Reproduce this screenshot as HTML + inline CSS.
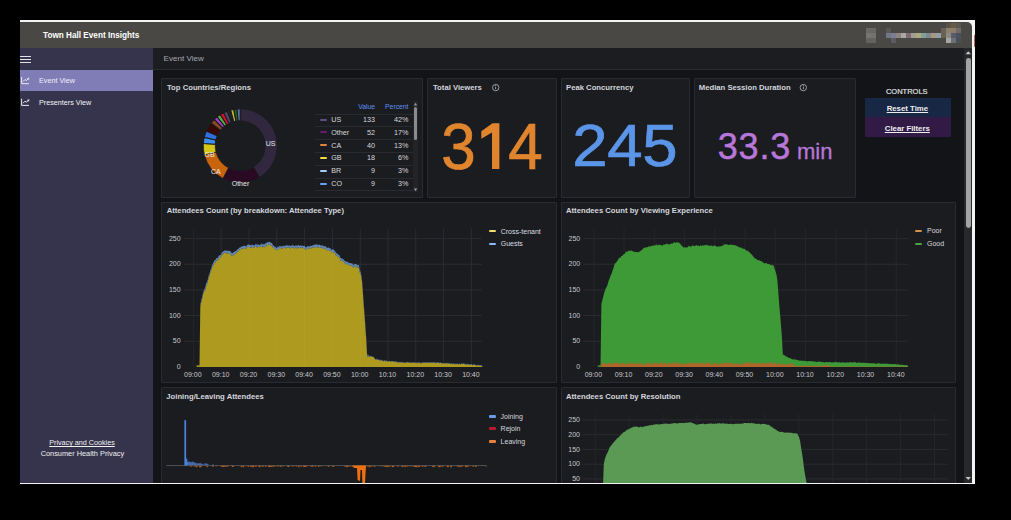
<!DOCTYPE html><html><head><meta charset="utf-8"><style>
*{margin:0;padding:0;box-sizing:border-box}
html,body{width:1011px;height:520px;background:#000;overflow:hidden;font-family:"Liberation Sans",sans-serif}
.a{position:absolute;white-space:nowrap}
.panel{position:absolute;background:#1b1c20;border:1px solid #2a2b30;border-radius:1px}
svg{position:absolute;left:0;top:0}
</style></head><body>
<div class="a" style="left:20px;top:20px;width:955px;height:464px;background:#f4f4f4;"></div>
<div class="a" style="left:0;top:0;width:1011px;height:483px;overflow:hidden">
<div class="a" style="left:20px;top:22px;width:952px;height:26px;background:#4a4845;border-top-right-radius:5px"></div>
<div class="a" style="left:974px;top:35px;width:1px;height:12px;background:#b86a58;"></div>
<div class="a" style="left:43.0px;top:29.5px;line-height:12px;font-size:8.2px;color:#ffffff;font-weight:bold;">Town Hall Event Insights</div>
<div class="a" style="left:866px;top:28px;width:5px;height:5px;background:#6a6866;"></div>
<div class="a" style="left:871px;top:28px;width:5px;height:5px;background:#686664;"></div>
<div class="a" style="left:866px;top:33px;width:5px;height:5px;background:#777572;"></div>
<div class="a" style="left:871px;top:33px;width:5px;height:5px;background:#74726f;"></div>
<div class="a" style="left:866px;top:38px;width:5px;height:5px;background:#646260;"></div>
<div class="a" style="left:871px;top:38px;width:5px;height:5px;background:#64625f;"></div>
<div class="a" style="left:886px;top:28px;width:5px;height:5px;background:#5a5855;"></div>
<div class="a" style="left:886px;top:33px;width:5px;height:5px;background:#6f7888;"></div>
<div class="a" style="left:891px;top:33px;width:5px;height:5px;background:#7d7c90;"></div>
<div class="a" style="left:896px;top:33px;width:5px;height:5px;background:#8c8480;"></div>
<div class="a" style="left:901px;top:33px;width:5px;height:5px;background:#a8a8a4;"></div>
<div class="a" style="left:906px;top:33px;width:5px;height:5px;background:#806878;"></div>
<div class="a" style="left:911px;top:33px;width:5px;height:5px;background:#a0a090;"></div>
<div class="a" style="left:916px;top:33px;width:5px;height:5px;background:#b0a880;"></div>
<div class="a" style="left:921px;top:33px;width:5px;height:5px;background:#80a098;"></div>
<div class="a" style="left:926px;top:33px;width:5px;height:5px;background:#808890;"></div>
<div class="a" style="left:931px;top:33px;width:5px;height:5px;background:#a89880;"></div>
<div class="a" style="left:936px;top:33px;width:5px;height:5px;background:#90a0a8;"></div>
<div class="a" style="left:941px;top:33px;width:5px;height:5px;background:#6a6050;"></div>
<div class="a" style="left:891px;top:38px;width:5px;height:5px;background:#5a5c64;"></div>
<div class="a" style="left:941px;top:28px;width:5px;height:5px;background:#6a6256;"></div>
<div class="a" style="left:946px;top:28px;width:5px;height:5px;background:#8a8070;"></div>
<div class="a" style="left:951px;top:28px;width:5px;height:5px;background:#907a68;"></div>
<div class="a" style="left:956px;top:28px;width:5px;height:5px;background:#6e6a66;"></div>
<div class="a" style="left:946px;top:23px;width:5px;height:5px;background:#5a5248;"></div>
<div class="a" style="left:951px;top:23px;width:5px;height:5px;background:#6a5a48;"></div>
<div class="a" style="left:956px;top:23px;width:5px;height:5px;background:#5a5650;"></div>
<div class="a" style="left:946px;top:33px;width:5px;height:5px;background:#8c8a84;"></div>
<div class="a" style="left:951px;top:33px;width:5px;height:5px;background:#5a5a68;"></div>
<div class="a" style="left:956px;top:33px;width:5px;height:5px;background:#4a5060;"></div>
<div class="a" style="left:946px;top:38px;width:5px;height:5px;background:#a8a6a2;"></div>
<div class="a" style="left:951px;top:38px;width:5px;height:5px;background:#6a7078;"></div>
<div class="a" style="left:956px;top:38px;width:5px;height:5px;background:#4a4e56;"></div>
<div class="a" style="left:20px;top:48px;width:133px;height:435px;background:#36344c;"></div>
<div class="a" style="left:20px;top:70px;width:133px;height:21px;background:#807db6;"></div>
<div class="a" style="left:20px;top:55.5px;width:11px;height:1.2px;background:#e0e0e8;"></div>
<div class="a" style="left:20px;top:58.6px;width:11px;height:1.2px;background:#e0e0e8;"></div>
<div class="a" style="left:20px;top:61.8px;width:11px;height:1.2px;background:#e0e0e8;"></div>
<div class="a" style="left:39.0px;top:74.7px;line-height:12px;font-size:7.2px;color:#f0f0f8;font-weight:normal;">Event View</div>
<div class="a" style="left:39.0px;top:96.8px;line-height:12px;font-size:7.2px;color:#f4f4f8;font-weight:normal;">Presenters View</div>
<svg width="1011" height="520" style="pointer-events:none"><g fill="none" stroke="#e8e8f0" stroke-width="1"><path d="M21.6,77.0 V83.7 H29"/><path d="M23,81.5 L25,79.5 L26.5,80.5 L28.8,78.1"/></g><path d="M29.3,77.7 l-2.4,0.3 l2.1,2.1 z" fill="#e8e8f0"/></svg>
<svg width="1011" height="520" style="pointer-events:none"><g fill="none" stroke="#e8e8f0" stroke-width="1"><path d="M21.6,98.7 V105.4 H29"/><path d="M23,103.2 L25,101.2 L26.5,102.2 L28.8,99.8"/></g><path d="M29.3,99.4 l-2.4,0.3 l2.1,2.1 z" fill="#e8e8f0"/></svg>
<div class="a" style="left:-68.0px;width:300px;text-align:center;top:437.0px;line-height:12px;font-size:7.2px;color:#f0f0f0;font-weight:normal;text-decoration:underline">Privacy and Cookies</div>
<div class="a" style="left:-67.6px;width:300px;text-align:center;top:447.9px;line-height:12px;font-size:7.36px;color:#f0f0f0;font-weight:normal;">Consumer Health Privacy</div>
<div class="a" style="left:153px;top:48px;width:812px;height:435px;background:#131418;"></div>
<div class="a" style="left:153px;top:48px;width:812px;height:21px;background:#1c1d21;"></div>
<div class="a" style="left:153px;top:69px;width:812px;height:1px;background:#2b2c31;"></div>
<div class="a" style="left:163.6px;top:53.4px;line-height:12px;font-size:8.1px;color:#a8a8b0;font-weight:normal;">Event View</div>
<div class="panel" style="left:161px;top:78px;width:262px;height:120px"></div>
<div class="a" style="left:167.0px;top:81.7px;line-height:12px;font-size:7.7px;color:#d4d6dc;font-weight:bold;">Top Countries/Regions</div>
<svg width="1011" height="520"><path d="M241.02,108.81 A37.00,37.00 0 0 1 259.53,177.38 L253.28,167.14 A25.00,25.00 0 0 0 240.77,120.81 Z" fill="#31283f" stroke="#1b1c20" stroke-width="0.8"/><path d="M259.53,177.38 A37.00,37.00 0 0 1 222.88,178.47 L228.51,167.87 A25.00,25.00 0 0 0 253.28,167.14 Z" fill="#2a0922" stroke="#1b1c20" stroke-width="0.8"/><path d="M222.88,178.47 A37.00,37.00 0 0 1 204.43,155.06 L216.05,152.06 A25.00,25.00 0 0 0 228.51,167.87 Z" fill="#c8650c" stroke="#1b1c20" stroke-width="0.8"/><path d="M204.43,155.06 A37.00,37.00 0 0 1 203.32,143.48 L215.30,144.23 A25.00,25.00 0 0 0 216.05,152.06 Z" fill="#d6c61a" stroke="#1b1c20" stroke-width="0.8"/><path d="M203.32,143.48 A37.00,37.00 0 0 1 204.24,137.29 L215.92,140.05 A25.00,25.00 0 0 0 215.30,144.23 Z" fill="#3d8ef0" stroke="#1b1c20" stroke-width="1.1"/><path d="M204.24,137.29 A37.00,37.00 0 0 1 206.34,130.99 L217.34,135.79 A25.00,25.00 0 0 0 215.92,140.05 Z" fill="#2f6fe0" stroke="#1b1c20" stroke-width="1.1"/><path d="M206.34,130.99 A37.00,37.00 0 0 1 211.09,123.02 L220.55,130.41 A25.00,25.00 0 0 0 217.34,135.79 Z" fill="#360808" stroke="#1b1c20" stroke-width="0.8"/><path d="M211.09,123.02 A37.00,37.00 0 0 1 214.32,119.41 L222.73,127.97 A25.00,25.00 0 0 0 220.55,130.41 Z" fill="#8a4a1c" stroke="#1b1c20" stroke-width="1.1"/><path d="M214.32,119.41 A37.00,37.00 0 0 1 217.22,116.84 L224.69,126.23 A25.00,25.00 0 0 0 222.73,127.97 Z" fill="#a23ccc" stroke="#1b1c20" stroke-width="1.1"/><path d="M217.22,116.84 A37.00,37.00 0 0 1 220.37,114.59 L226.82,124.72 A25.00,25.00 0 0 0 224.69,126.23 Z" fill="#56b040" stroke="#1b1c20" stroke-width="1.1"/><path d="M220.37,114.59 A37.00,37.00 0 0 1 223.74,112.69 L229.10,123.43 A25.00,25.00 0 0 0 226.82,124.72 Z" fill="#e0102a" stroke="#1b1c20" stroke-width="1.1"/><path d="M223.74,112.69 A37.00,37.00 0 0 1 227.29,111.14 L231.49,122.38 A25.00,25.00 0 0 0 229.10,123.43 Z" fill="#54466a" stroke="#1b1c20" stroke-width="1.1"/><path d="M227.29,111.14 A37.00,37.00 0 0 1 230.67,110.06 L233.78,121.65 A25.00,25.00 0 0 0 231.49,122.38 Z" fill="#18222e" stroke="#1b1c20" stroke-width="1.1"/><path d="M230.67,110.06 A37.00,37.00 0 0 1 233.83,109.36 L235.91,121.18 A25.00,25.00 0 0 0 233.78,121.65 Z" fill="#c8b830" stroke="#1b1c20" stroke-width="1.1"/><path d="M233.83,109.36 A37.00,37.00 0 0 1 237.03,108.94 L238.07,120.90 A25.00,25.00 0 0 0 235.91,121.18 Z" fill="#2a6020" stroke="#1b1c20" stroke-width="1.1"/><path d="M237.03,108.94 A37.00,37.00 0 0 1 240.25,108.80 L240.25,120.80 A25.00,25.00 0 0 0 238.07,120.90 Z" fill="#5a7aa0" stroke="#1b1c20" stroke-width="1.1"/></svg>
<div class="a" style="left:120.5px;width:300px;text-align:center;top:138.4px;line-height:12px;font-size:7px;color:#e8e8ec;font-weight:normal;">US</div>
<div class="a" style="left:90.5px;width:300px;text-align:center;top:177.6px;line-height:12px;font-size:7px;color:#e8e8ec;font-weight:normal;">Other</div>
<div class="a" style="left:65.8px;width:300px;text-align:center;top:165.6px;line-height:12px;font-size:7px;color:#e8e8ec;font-weight:normal;">CA</div>
<div class="a" style="left:59.6px;width:300px;text-align:center;top:148.6px;line-height:12px;font-size:7px;color:#e8e8ec;font-weight:normal;">GB</div>
<div class="a" style="left:75.1px;width:300px;text-align:right;top:100.8px;line-height:12px;font-size:6.8px;color:#6090f0;font-weight:normal;">Value</div>
<div class="a" style="left:108.5px;width:300px;text-align:right;top:100.8px;line-height:12px;font-size:6.8px;color:#6090f0;font-weight:normal;">Percent</div>
<div class="a" style="left:314.9px;top:113.5px;width:98px;height:0.8px;background:#2a2b30;"></div>
<div class="a" style="left:319.6px;top:118.6px;width:7.3px;height:2px;background:#5e5080;border-radius:1px"></div>
<div class="a" style="left:331.2px;top:113.9px;line-height:12px;font-size:7.2px;color:#d8d9dc;font-weight:normal;">US</div>
<div class="a" style="left:75.1px;width:300px;text-align:right;top:113.9px;line-height:12px;font-size:7.2px;color:#d8d9dc;font-weight:normal;">133</div>
<div class="a" style="left:108.5px;width:300px;text-align:right;top:113.9px;line-height:12px;font-size:7.2px;color:#d8d9dc;font-weight:normal;">42%</div>
<div class="a" style="left:314.9px;top:126.32px;width:98px;height:0.8px;background:#2a2b30;"></div>
<div class="a" style="left:319.6px;top:131.42px;width:7.3px;height:2px;background:#6a1a66;border-radius:1px"></div>
<div class="a" style="left:331.2px;top:126.7px;line-height:12px;font-size:7.2px;color:#d8d9dc;font-weight:normal;">Other</div>
<div class="a" style="left:75.1px;width:300px;text-align:right;top:126.7px;line-height:12px;font-size:7.2px;color:#d8d9dc;font-weight:normal;">52</div>
<div class="a" style="left:108.5px;width:300px;text-align:right;top:126.7px;line-height:12px;font-size:7.2px;color:#d8d9dc;font-weight:normal;">17%</div>
<div class="a" style="left:314.9px;top:139.14px;width:98px;height:0.8px;background:#2a2b30;"></div>
<div class="a" style="left:319.6px;top:144.23999999999998px;width:7.3px;height:2px;background:#e0843c;border-radius:1px"></div>
<div class="a" style="left:331.2px;top:139.5px;line-height:12px;font-size:7.2px;color:#d8d9dc;font-weight:normal;">CA</div>
<div class="a" style="left:75.1px;width:300px;text-align:right;top:139.5px;line-height:12px;font-size:7.2px;color:#d8d9dc;font-weight:normal;">40</div>
<div class="a" style="left:108.5px;width:300px;text-align:right;top:139.5px;line-height:12px;font-size:7.2px;color:#d8d9dc;font-weight:normal;">13%</div>
<div class="a" style="left:314.9px;top:151.96px;width:98px;height:0.8px;background:#2a2b30;"></div>
<div class="a" style="left:319.6px;top:157.06px;width:7.3px;height:2px;background:#f0dc40;border-radius:1px"></div>
<div class="a" style="left:331.2px;top:152.4px;line-height:12px;font-size:7.2px;color:#d8d9dc;font-weight:normal;">GB</div>
<div class="a" style="left:75.1px;width:300px;text-align:right;top:152.4px;line-height:12px;font-size:7.2px;color:#d8d9dc;font-weight:normal;">18</div>
<div class="a" style="left:108.5px;width:300px;text-align:right;top:152.4px;line-height:12px;font-size:7.2px;color:#d8d9dc;font-weight:normal;">6%</div>
<div class="a" style="left:314.9px;top:164.78px;width:98px;height:0.8px;background:#2a2b30;"></div>
<div class="a" style="left:319.6px;top:169.88px;width:7.3px;height:2px;background:#a8c8f8;border-radius:1px"></div>
<div class="a" style="left:331.2px;top:165.2px;line-height:12px;font-size:7.2px;color:#d8d9dc;font-weight:normal;">BR</div>
<div class="a" style="left:75.1px;width:300px;text-align:right;top:165.2px;line-height:12px;font-size:7.2px;color:#d8d9dc;font-weight:normal;">9</div>
<div class="a" style="left:108.5px;width:300px;text-align:right;top:165.2px;line-height:12px;font-size:7.2px;color:#d8d9dc;font-weight:normal;">3%</div>
<div class="a" style="left:314.9px;top:177.6px;width:98px;height:0.8px;background:#2a2b30;"></div>
<div class="a" style="left:319.6px;top:182.7px;width:7.3px;height:2px;background:#6aa0f0;border-radius:1px"></div>
<div class="a" style="left:331.2px;top:178.0px;line-height:12px;font-size:7.2px;color:#d8d9dc;font-weight:normal;">CO</div>
<div class="a" style="left:75.1px;width:300px;text-align:right;top:178.0px;line-height:12px;font-size:7.2px;color:#d8d9dc;font-weight:normal;">9</div>
<div class="a" style="left:108.5px;width:300px;text-align:right;top:178.0px;line-height:12px;font-size:7.2px;color:#d8d9dc;font-weight:normal;">3%</div>
<div class="a" style="left:314.9px;top:190.42000000000002px;width:98px;height:0.8px;background:#2a2b30;"></div>
<div class="a" style="left:413.4px;top:101px;width:4.3px;height:91px;background:#232428;"></div>
<div class="a" style="left:414px;top:107.2px;width:3.2px;height:32.7px;background:#8a8b8e;border-radius:1.5px"></div>
<svg width="1011" height="520"><path d="M413.9,105.5 L417.2,105.5 L415.55,102.8 Z" fill="#9a9b9e"/><path d="M413.9,188.5 L417.2,188.5 L415.55,191.2 Z" fill="#9a9b9e"/></svg>
<div class="panel" style="left:427px;top:78px;width:129.5px;height:120px"></div>
<div class="a" style="left:433.0px;top:81.7px;line-height:12px;font-size:7.7px;color:#d4d6dc;font-weight:bold;">Total Viewers</div>
<div class="panel" style="left:561px;top:78px;width:128.5px;height:120px"></div>
<div class="a" style="left:566.0px;top:81.7px;line-height:12px;font-size:7.7px;color:#d4d6dc;font-weight:bold;">Peak Concurrency</div>
<div class="panel" style="left:693.5px;top:78px;width:162.5px;height:120px"></div>
<div class="a" style="left:698.8px;top:81.7px;line-height:12px;font-size:7.7px;color:#d4d6dc;font-weight:bold;">Median Session Duration</div>
<svg width="1011" height="520"><circle cx="495.7" cy="87.6" r="3.2" fill="none" stroke="#b8b9bc" stroke-width="0.8"/><rect x="495.3" y="86.6" width="0.8" height="2.6" fill="#b8b9bc"/><rect x="495.3" y="85.1" width="0.8" height="0.8" fill="#b8b9bc"/></svg>
<svg width="1011" height="520"><circle cx="803.3" cy="87.6" r="3.2" fill="none" stroke="#b8b9bc" stroke-width="0.8"/><rect x="802.9" y="86.6" width="0.8" height="2.6" fill="#b8b9bc"/><rect x="802.9" y="85.1" width="0.8" height="0.8" fill="#b8b9bc"/></svg>
<div class="a" style="left:308.6px;width:300px;text-align:center;top:140.5px;line-height:12px;font-size:62px;color:#e0852e;font-weight:normal;transform:scaleY(1.055);-webkit-text-stroke:0.7px #e0852e">3</div>
<div class="a" style="left:375.6px;width:300px;text-align:center;top:140.5px;line-height:12px;font-size:62px;color:#e0852e;font-weight:normal;transform:scaleY(1.055);-webkit-text-stroke:0.7px #e0852e">4</div>
<svg width="1011" height="520"><path d="M492,123.2 L499.4,123.2 L499.4,169 L492,169 L492,132.6 L481.3,138.8 L481.3,131.2 L492.5,123.2 Z" fill="#e0852e"/></svg>
<div class="a" style="left:440.1px;width:300px;text-align:center;top:140.3px;line-height:12px;font-size:60px;color:#5b95e8;font-weight:normal;transform:scaleX(1.06);-webkit-text-stroke:0.7px #5b95e8">2</div>
<div class="a" style="left:474.8px;width:300px;text-align:center;top:140.3px;line-height:12px;font-size:60px;color:#5b95e8;font-weight:normal;transform:scaleX(1.06);-webkit-text-stroke:0.7px #5b95e8">4</div>
<div class="a" style="left:510.4px;width:300px;text-align:center;top:140.3px;line-height:12px;font-size:60px;color:#5b95e8;font-weight:normal;transform:scaleX(1.06);-webkit-text-stroke:0.7px #5b95e8">5</div>
<div class="a" style="left:717.8px;top:140.8px;line-height:12px;font-size:36px;color:#b877d9;font-weight:normal;-webkit-text-stroke:0.5px #b877d9;letter-spacing:0.8px">33.3</div>
<div class="a" style="left:797.0px;top:145.5px;line-height:12px;font-size:22px;color:#b877d9;font-weight:normal;-webkit-text-stroke:0.3px #b877d9">min</div>
<div class="a" style="left:756.8px;width:300px;text-align:center;top:85.5px;line-height:12px;font-size:7.5px;color:#e4e5e8;font-weight:normal;-webkit-text-stroke:0.15px #e4e5e8">CONTROLS</div>
<div class="a" style="left:865px;top:98px;width:85.5px;height:19.2px;background:#172744;"></div>
<div class="a" style="left:865px;top:117.2px;width:85.5px;height:19.6px;background:#321a47;"></div>
<div class="a" style="left:757.4px;width:300px;text-align:center;top:103.3px;line-height:12px;font-size:7.8px;color:#eeeeee;font-weight:bold;text-decoration:underline">Reset Time</div>
<div class="a" style="left:757.3px;width:300px;text-align:center;top:122.9px;line-height:12px;font-size:7.8px;color:#eeeeee;font-weight:bold;text-decoration:underline">Clear Filters</div>
<div class="panel" style="left:161px;top:202px;width:396px;height:181px"></div>
<div class="a" style="left:166.7px;top:205.4px;line-height:12px;font-size:7.7px;color:#d4d6dc;font-weight:bold;">Attendees Count (by breakdown: Attendee Type)</div>
<div class="panel" style="left:561px;top:202px;width:395px;height:181px"></div>
<div class="a" style="left:566.0px;top:205.4px;line-height:12px;font-size:7.7px;color:#d4d6dc;font-weight:bold;">Attendees Count by Viewing Experience</div>
<div class="panel" style="left:161px;top:387px;width:396px;height:103px"></div>
<div class="a" style="left:166.3px;top:390.9px;line-height:12px;font-size:7.7px;color:#d4d6dc;font-weight:bold;">Joining/Leaving Attendees</div>
<div class="panel" style="left:561px;top:387px;width:395px;height:103px"></div>
<div class="a" style="left:566.0px;top:390.5px;line-height:12px;font-size:7.7px;color:#d4d6dc;font-weight:bold;">Attendees Count by Resolution</div>
<div class="a" style="left:-119.4px;width:300px;text-align:right;top:361.0px;line-height:12px;font-size:7px;color:#c8c9cc;font-weight:normal;">0</div>
<div class="a" style="left:-119.4px;width:300px;text-align:right;top:335.3px;line-height:12px;font-size:7px;color:#c8c9cc;font-weight:normal;">50</div>
<div class="a" style="left:-119.4px;width:300px;text-align:right;top:309.7px;line-height:12px;font-size:7px;color:#c8c9cc;font-weight:normal;">100</div>
<div class="a" style="left:-119.4px;width:300px;text-align:right;top:284.0px;line-height:12px;font-size:7px;color:#c8c9cc;font-weight:normal;">150</div>
<div class="a" style="left:-119.4px;width:300px;text-align:right;top:258.4px;line-height:12px;font-size:7px;color:#c8c9cc;font-weight:normal;">200</div>
<div class="a" style="left:-119.4px;width:300px;text-align:right;top:232.7px;line-height:12px;font-size:7px;color:#c8c9cc;font-weight:normal;">250</div>
<div class="a" style="left:42.8px;width:300px;text-align:center;top:368.5px;line-height:12px;font-size:7px;color:#c8c9cc;font-weight:normal;">09:00</div>
<div class="a" style="left:70.7px;width:300px;text-align:center;top:368.5px;line-height:12px;font-size:7px;color:#c8c9cc;font-weight:normal;">09:10</div>
<div class="a" style="left:98.5px;width:300px;text-align:center;top:368.5px;line-height:12px;font-size:7px;color:#c8c9cc;font-weight:normal;">09:20</div>
<div class="a" style="left:126.3px;width:300px;text-align:center;top:368.5px;line-height:12px;font-size:7px;color:#c8c9cc;font-weight:normal;">09:30</div>
<div class="a" style="left:154.1px;width:300px;text-align:center;top:368.5px;line-height:12px;font-size:7px;color:#c8c9cc;font-weight:normal;">09:40</div>
<div class="a" style="left:181.9px;width:300px;text-align:center;top:368.5px;line-height:12px;font-size:7px;color:#c8c9cc;font-weight:normal;">09:50</div>
<div class="a" style="left:209.7px;width:300px;text-align:center;top:368.5px;line-height:12px;font-size:7px;color:#c8c9cc;font-weight:normal;">10:00</div>
<div class="a" style="left:237.5px;width:300px;text-align:center;top:368.5px;line-height:12px;font-size:7px;color:#c8c9cc;font-weight:normal;">10:10</div>
<div class="a" style="left:265.3px;width:300px;text-align:center;top:368.5px;line-height:12px;font-size:7px;color:#c8c9cc;font-weight:normal;">10:20</div>
<div class="a" style="left:293.1px;width:300px;text-align:center;top:368.5px;line-height:12px;font-size:7px;color:#c8c9cc;font-weight:normal;">10:30</div>
<div class="a" style="left:320.9px;width:300px;text-align:center;top:368.5px;line-height:12px;font-size:7px;color:#c8c9cc;font-weight:normal;">10:40</div>
<div class="a" style="left:488.9px;top:229.9px;width:7.3px;height:2.4px;background:#f2dd6a;border-radius:1px"></div>
<div class="a" style="left:500.7px;top:225.7px;line-height:12px;font-size:7px;color:#dcdde0;font-weight:normal;">Cross-tenant</div>
<div class="a" style="left:488.9px;top:242.5px;width:7.3px;height:2.4px;background:#8ab8ff;border-radius:1px"></div>
<div class="a" style="left:500.7px;top:238.3px;line-height:12px;font-size:7px;color:#dcdde0;font-weight:normal;">Guests</div>
<div class="a" style="left:280.2px;width:300px;text-align:right;top:361.0px;line-height:12px;font-size:7px;color:#c8c9cc;font-weight:normal;">0</div>
<div class="a" style="left:280.2px;width:300px;text-align:right;top:335.3px;line-height:12px;font-size:7px;color:#c8c9cc;font-weight:normal;">50</div>
<div class="a" style="left:280.2px;width:300px;text-align:right;top:309.7px;line-height:12px;font-size:7px;color:#c8c9cc;font-weight:normal;">100</div>
<div class="a" style="left:280.2px;width:300px;text-align:right;top:284.0px;line-height:12px;font-size:7px;color:#c8c9cc;font-weight:normal;">150</div>
<div class="a" style="left:280.2px;width:300px;text-align:right;top:258.4px;line-height:12px;font-size:7px;color:#c8c9cc;font-weight:normal;">200</div>
<div class="a" style="left:280.2px;width:300px;text-align:right;top:232.7px;line-height:12px;font-size:7px;color:#c8c9cc;font-weight:normal;">250</div>
<div class="a" style="left:443.4px;width:300px;text-align:center;top:368.5px;line-height:12px;font-size:7px;color:#c8c9cc;font-weight:normal;">09:00</div>
<div class="a" style="left:473.6px;width:300px;text-align:center;top:368.5px;line-height:12px;font-size:7px;color:#c8c9cc;font-weight:normal;">09:10</div>
<div class="a" style="left:503.8px;width:300px;text-align:center;top:368.5px;line-height:12px;font-size:7px;color:#c8c9cc;font-weight:normal;">09:20</div>
<div class="a" style="left:534.1px;width:300px;text-align:center;top:368.5px;line-height:12px;font-size:7px;color:#c8c9cc;font-weight:normal;">09:30</div>
<div class="a" style="left:564.3px;width:300px;text-align:center;top:368.5px;line-height:12px;font-size:7px;color:#c8c9cc;font-weight:normal;">09:40</div>
<div class="a" style="left:594.5px;width:300px;text-align:center;top:368.5px;line-height:12px;font-size:7px;color:#c8c9cc;font-weight:normal;">09:50</div>
<div class="a" style="left:624.8px;width:300px;text-align:center;top:368.5px;line-height:12px;font-size:7px;color:#c8c9cc;font-weight:normal;">10:00</div>
<div class="a" style="left:655.0px;width:300px;text-align:center;top:368.5px;line-height:12px;font-size:7px;color:#c8c9cc;font-weight:normal;">10:10</div>
<div class="a" style="left:685.3px;width:300px;text-align:center;top:368.5px;line-height:12px;font-size:7px;color:#c8c9cc;font-weight:normal;">10:20</div>
<div class="a" style="left:715.5px;width:300px;text-align:center;top:368.5px;line-height:12px;font-size:7px;color:#c8c9cc;font-weight:normal;">10:30</div>
<div class="a" style="left:745.8px;width:300px;text-align:center;top:368.5px;line-height:12px;font-size:7px;color:#c8c9cc;font-weight:normal;">10:40</div>
<div class="a" style="left:915px;top:229.9px;width:7.3px;height:2.4px;background:#d8904a;border-radius:1px"></div>
<div class="a" style="left:927.0px;top:225.1px;line-height:12px;font-size:7px;color:#d8d9dc;font-weight:normal;">Poor</div>
<div class="a" style="left:915px;top:242.5px;width:7.3px;height:2.4px;background:#4aa443;border-radius:1px"></div>
<div class="a" style="left:927.0px;top:237.7px;line-height:12px;font-size:7px;color:#d8d9dc;font-weight:normal;">Good</div>
<div class="a" style="left:280.0px;width:300px;text-align:right;top:473.0px;line-height:12px;font-size:7px;color:#c8c9cc;font-weight:normal;">50</div>
<div class="a" style="left:280.0px;width:300px;text-align:right;top:458.3px;line-height:12px;font-size:7px;color:#c8c9cc;font-weight:normal;">100</div>
<div class="a" style="left:280.0px;width:300px;text-align:right;top:443.5px;line-height:12px;font-size:7px;color:#c8c9cc;font-weight:normal;">150</div>
<div class="a" style="left:280.0px;width:300px;text-align:right;top:428.8px;line-height:12px;font-size:7px;color:#c8c9cc;font-weight:normal;">200</div>
<div class="a" style="left:280.0px;width:300px;text-align:right;top:414.0px;line-height:12px;font-size:7px;color:#c8c9cc;font-weight:normal;">250</div>
<div class="a" style="left:489px;top:415.4px;width:7px;height:2.3px;background:#6a9ae8;border-radius:1px"></div>
<div class="a" style="left:500.6px;top:410.5px;line-height:12px;font-size:7px;color:#d8d9dc;font-weight:normal;">Joining</div>
<div class="a" style="left:489px;top:427.4px;width:7px;height:2.3px;background:#b81a30;border-radius:1px"></div>
<div class="a" style="left:500.6px;top:422.5px;line-height:12px;font-size:7px;color:#d8d9dc;font-weight:normal;">Rejoin</div>
<div class="a" style="left:489px;top:440.3px;width:7px;height:2.3px;background:#e8803a;border-radius:1px"></div>
<div class="a" style="left:500.6px;top:435.8px;line-height:12px;font-size:7px;color:#d8d9dc;font-weight:normal;">Leaving</div>
<svg width="1011" height="483"><line x1="183.8" x2="482.0" y1="341.24" y2="341.24" stroke="#2b2c30" stroke-width="1"/><line x1="183.8" x2="482.0" y1="315.58" y2="315.58" stroke="#2b2c30" stroke-width="1"/><line x1="183.8" x2="482.0" y1="289.92" y2="289.92" stroke="#2b2c30" stroke-width="1"/><line x1="183.8" x2="482.0" y1="264.26" y2="264.26" stroke="#2b2c30" stroke-width="1"/><line x1="183.8" x2="482.0" y1="238.60" y2="238.60" stroke="#2b2c30" stroke-width="1"/><line x1="193.35" x2="193.35" y1="228.7" y2="366.9" stroke="#252629" stroke-width="1"/><line x1="221.16" x2="221.16" y1="228.7" y2="366.9" stroke="#252629" stroke-width="1"/><line x1="248.96" x2="248.96" y1="228.7" y2="366.9" stroke="#252629" stroke-width="1"/><line x1="276.76" x2="276.76" y1="228.7" y2="366.9" stroke="#252629" stroke-width="1"/><line x1="304.57" x2="304.57" y1="228.7" y2="366.9" stroke="#252629" stroke-width="1"/><line x1="332.38" x2="332.38" y1="228.7" y2="366.9" stroke="#252629" stroke-width="1"/><line x1="360.18" x2="360.18" y1="228.7" y2="366.9" stroke="#252629" stroke-width="1"/><line x1="387.99" x2="387.99" y1="228.7" y2="366.9" stroke="#252629" stroke-width="1"/><line x1="415.79" x2="415.79" y1="228.7" y2="366.9" stroke="#252629" stroke-width="1"/><line x1="443.60" x2="443.60" y1="228.7" y2="366.9" stroke="#252629" stroke-width="1"/><line x1="471.40" x2="471.40" y1="228.7" y2="366.9" stroke="#252629" stroke-width="1"/><path d="M196.96,366.90L196.96,366.90L197.80,366.90L198.63,366.90L199.47,366.90L200.30,306.67L201.14,302.47L201.97,299.59L202.80,295.42L203.64,292.54L204.47,291.56L205.31,289.83L206.14,285.82L206.97,284.50L207.81,281.45L208.64,277.75L209.48,275.84L210.31,272.44L211.15,270.42L211.98,267.61L212.81,266.63L213.65,264.61L214.48,263.12L215.32,262.73L216.15,260.68L216.98,259.90L217.82,260.48L218.65,258.43L219.49,258.00L220.32,257.69L221.16,256.50L221.99,254.62L222.82,254.55L223.66,253.31L224.49,252.59L225.33,253.11L226.16,252.24L226.99,253.99L227.83,253.08L228.66,253.59L229.50,252.76L230.33,253.81L231.16,255.23L232.00,255.80L232.83,255.94L233.67,254.18L234.50,254.33L235.34,253.44L236.17,253.13L237.00,251.74L237.84,251.38L238.67,251.23L239.51,249.45L240.34,249.23L241.17,249.02L242.01,248.85L242.84,248.44L243.68,248.29L244.51,247.69L245.35,248.73L246.18,248.62L247.01,247.34L247.85,246.71L248.68,247.04L249.52,247.18L250.35,246.94L251.18,248.20L252.02,246.56L252.85,247.22L253.69,248.04L254.52,247.57L255.36,246.00L256.19,245.86L257.02,248.02L257.86,246.49L258.69,246.76L259.53,247.27L260.36,246.79L261.19,246.14L262.03,245.46L262.86,247.60L263.70,246.51L264.53,247.38L265.36,245.68L266.20,246.38L267.03,244.16L267.87,244.02L268.70,245.35L269.54,244.00L270.37,244.66L271.20,245.82L272.04,245.53L272.87,247.79L273.71,247.96L274.54,248.48L275.37,249.37L276.21,249.76L277.04,250.09L277.88,249.03L278.71,249.28L279.55,247.62L280.38,247.64L281.21,248.60L282.05,248.94L282.88,248.27L283.72,247.83L284.55,247.59L285.38,248.47L286.22,247.75L287.05,246.91L287.89,247.53L288.72,247.63L289.56,247.18L290.39,248.57L291.22,247.88L292.06,246.48L292.89,247.76L293.73,247.43L294.56,249.16L295.39,247.48L296.23,247.57L297.06,248.82L297.90,247.32L298.73,247.85L299.57,248.47L300.40,247.34L301.23,247.96L302.07,247.34L302.90,248.49L303.74,247.81L304.57,248.57L305.40,249.98L306.24,249.73L307.07,248.26L307.91,247.84L308.74,248.89L309.57,248.22L310.41,247.73L311.24,248.64L312.08,247.55L312.91,247.30L313.75,247.83L314.58,246.79L315.41,247.51L316.25,246.78L317.08,246.72L317.92,248.00L318.75,247.29L319.58,247.09L320.42,247.77L321.25,247.68L322.09,246.88L322.92,248.76L323.76,249.03L324.59,248.91L325.42,248.20L326.26,250.02L327.09,250.14L327.93,250.34L328.76,249.98L329.59,250.80L330.43,250.55L331.26,252.23L332.10,251.88L332.93,252.36L333.77,252.34L334.60,252.62L335.43,254.55L336.27,255.71L337.10,255.64L337.94,256.61L338.77,257.34L339.60,257.47L340.44,260.53L341.27,261.03L342.11,260.42L342.94,261.26L343.78,261.87L344.61,263.09L345.44,264.10L346.28,264.42L347.11,263.19L347.95,264.37L348.78,265.60L349.61,264.86L350.45,266.00L351.28,265.51L352.12,265.54L352.95,267.19L353.78,267.83L354.62,266.02L355.45,266.74L356.29,266.11L357.12,267.88L357.96,266.84L358.79,267.72L359.62,271.98L360.46,273.78L361.29,276.75L362.13,282.46L362.96,294.28L363.79,306.57L364.63,317.15L365.46,329.13L366.30,340.87L367.13,356.36L367.97,357.56L368.80,355.24L369.63,357.07L370.47,355.89L371.30,356.69L372.14,356.65L372.97,357.08L373.80,357.46L374.64,358.44L375.47,359.87L376.31,358.90L377.14,359.95L377.98,360.03L378.81,359.93L379.64,360.23L380.48,360.52L381.31,360.28L382.15,360.74L382.98,361.07L383.81,361.21L384.65,360.77L385.48,361.16L386.32,360.97L387.15,361.39L387.98,361.58L388.82,361.37L389.65,361.21L390.49,361.80L391.32,361.36L392.16,361.32L392.99,361.48L393.82,361.53L394.66,362.27L395.49,361.82L396.33,361.70L397.16,362.43L397.99,362.31L398.83,362.38L399.66,362.24L400.50,362.39L401.33,362.41L402.17,362.22L403.00,362.87L403.83,362.85L404.67,362.81L405.50,362.84L406.34,362.91L407.17,362.18L408.00,362.31L408.84,362.96L409.67,362.64L410.51,362.81L411.34,362.84L412.18,362.83L413.01,362.61L413.84,362.68L414.68,362.89L415.51,363.05L416.35,362.96L417.18,363.15L418.01,362.81L418.85,362.70L419.68,363.00L420.52,363.27L421.35,363.21L422.19,363.03L423.02,362.82L423.85,362.66L424.69,362.97L425.52,362.60L426.36,362.73L427.19,362.87L428.02,362.90L428.86,362.78L429.69,362.59L430.53,362.80L431.36,362.56L432.19,362.73L433.03,362.94L433.86,362.76L434.70,362.69L435.53,363.26L436.37,363.02L437.20,363.08L438.03,362.76L438.87,362.78L439.70,363.30L440.54,362.92L441.37,363.07L442.20,363.56L443.04,363.45L443.87,363.78L444.71,363.25L445.54,363.41L446.38,363.25L447.21,363.36L448.04,363.50L448.88,363.48L449.71,363.65L450.55,364.06L451.38,363.70L452.21,364.21L453.05,364.13L453.88,363.64L454.72,364.28L455.55,364.27L456.39,364.30L457.22,363.69L458.05,364.30L458.89,364.46L459.72,363.82L460.56,364.44L461.39,363.88L462.22,364.06L463.06,363.96L463.89,363.91L464.73,364.27L465.56,364.14L466.40,364.82L467.23,364.27L468.06,364.53L468.90,364.41L469.73,364.96L470.57,364.49L471.40,364.39L472.23,365.18L473.07,365.04L473.90,364.92L474.74,364.78L475.57,365.34L476.40,365.47L477.24,365.49L478.07,365.27L478.91,365.23L479.74,365.60L480.58,365.70L481.41,365.75L482.24,365.87L482.24,366.90Z" fill="#ad9a1f"/><path d="M196.96,366.90L196.96,366.90L197.80,366.90L198.63,366.90L199.47,366.90L200.30,304.63L201.14,300.57L201.97,297.39L202.80,293.46L203.64,290.68L204.47,289.35L205.31,287.09L206.14,283.21L206.97,281.91L207.81,279.43L208.64,275.40L209.48,273.76L210.31,270.46L211.15,268.51L211.98,265.59L212.81,263.88L213.65,261.96L214.48,260.50L215.32,260.11L216.15,258.68L216.98,257.78L217.82,258.04L218.65,255.88L219.49,255.32L220.32,254.99L221.16,254.62L221.99,252.21L222.82,252.06L223.66,251.00L224.49,250.61L225.33,250.82L226.16,250.35L226.99,251.23L227.83,250.39L228.66,251.24L229.50,250.65L230.33,251.08L231.16,252.85L232.00,253.10L232.83,253.28L233.67,251.87L234.50,252.11L235.34,251.02L236.17,250.89L237.00,249.78L237.84,249.27L238.67,248.60L239.51,247.61L240.34,247.39L241.17,246.58L242.01,246.77L242.84,246.09L243.68,246.01L244.51,245.54L245.35,245.91L246.18,246.63L247.01,245.12L247.85,244.71L248.68,244.60L249.52,245.10L250.35,244.77L251.18,245.64L252.02,244.43L252.85,244.85L253.69,245.32L254.52,245.67L255.36,244.15L256.19,243.83L257.02,245.44L257.86,244.06L258.69,244.72L259.53,245.14L260.36,244.81L261.19,243.87L262.03,243.62L262.86,245.09L263.70,243.79L264.53,244.61L265.36,243.12L266.20,243.60L267.03,242.35L267.87,241.92L268.70,242.56L269.54,241.41L270.37,242.45L271.20,243.05L272.04,243.10L272.87,245.16L273.71,245.86L274.54,246.48L275.37,247.12L276.21,247.83L277.04,247.91L277.88,246.25L278.71,247.14L279.55,245.82L280.38,245.80L281.21,246.63L282.05,246.34L282.88,246.10L283.72,245.74L284.55,245.70L285.38,245.67L286.22,245.52L287.05,244.90L287.89,245.67L288.72,245.78L289.56,245.21L290.39,246.07L291.22,245.93L292.06,244.65L292.89,245.46L293.73,245.38L294.56,246.34L295.39,245.56L296.23,245.23L297.06,246.23L297.90,245.10L298.73,245.04L299.57,246.19L300.40,245.29L301.23,245.74L302.07,245.50L302.90,246.26L303.74,245.76L304.57,245.86L305.40,247.33L306.24,247.42L307.07,246.43L307.91,245.78L308.74,246.84L309.57,246.21L310.41,245.70L311.24,245.95L312.08,245.61L312.91,245.45L313.75,245.09L314.58,244.41L315.41,244.70L316.25,244.57L317.08,244.00L317.92,245.53L318.75,244.68L319.58,244.53L320.42,245.47L321.25,245.78L322.09,244.86L322.92,246.06L323.76,246.31L324.59,246.16L325.42,246.06L326.26,247.55L327.09,247.53L327.93,247.89L328.76,247.35L329.59,248.46L330.43,248.08L331.26,249.73L332.10,249.81L332.93,249.61L333.77,249.56L334.60,250.75L335.43,251.75L336.27,252.93L337.10,253.16L337.94,254.77L338.77,254.62L339.60,255.55L340.44,257.74L341.27,258.55L342.11,258.56L342.94,259.30L343.78,259.42L344.61,260.71L345.44,261.54L346.28,261.67L347.11,261.17L347.95,262.57L348.78,262.86L349.61,263.05L350.45,263.31L351.28,263.59L352.12,262.91L352.95,264.59L353.78,265.13L354.62,263.66L355.45,264.04L356.29,264.11L357.12,265.39L357.96,264.70L358.79,265.01L359.62,269.39L360.46,271.50L361.29,274.42L362.13,280.64L362.96,292.45L363.79,304.17L364.63,314.85L365.46,326.45L366.30,338.45L367.13,354.42L367.97,355.39L368.80,354.83L369.63,356.66L370.47,355.48L371.30,356.28L372.14,356.24L372.97,356.67L373.80,357.05L374.64,358.03L375.47,359.46L376.31,358.49L377.14,359.54L377.98,359.62L378.81,359.52L379.64,359.82L380.48,360.11L381.31,359.87L382.15,360.33L382.98,360.66L383.81,360.80L384.65,360.36L385.48,360.75L386.32,360.56L387.15,360.98L387.98,361.17L388.82,360.96L389.65,360.80L390.49,361.39L391.32,360.95L392.16,360.91L392.99,361.07L393.82,361.12L394.66,361.86L395.49,361.41L396.33,361.29L397.16,362.02L397.99,361.90L398.83,361.97L399.66,361.83L400.50,361.98L401.33,362.00L402.17,361.80L403.00,362.46L403.83,362.44L404.67,362.40L405.50,362.43L406.34,362.50L407.17,361.77L408.00,361.89L408.84,362.55L409.67,362.23L410.51,362.40L411.34,362.43L412.18,362.42L413.01,362.20L413.84,362.27L414.68,362.48L415.51,362.64L416.35,362.55L417.18,362.74L418.01,362.40L418.85,362.29L419.68,362.59L420.52,362.86L421.35,362.80L422.19,362.62L423.02,362.41L423.85,362.25L424.69,362.56L425.52,362.19L426.36,362.32L427.19,362.46L428.02,362.49L428.86,362.37L429.69,362.18L430.53,362.39L431.36,362.15L432.19,362.32L433.03,362.53L433.86,362.35L434.70,362.27L435.53,362.84L436.37,362.61L437.20,362.67L438.03,362.35L438.87,362.37L439.70,362.88L440.54,362.51L441.37,362.66L442.20,363.15L443.04,363.04L443.87,363.37L444.71,362.84L445.54,362.99L446.38,362.84L447.21,362.95L448.04,363.09L448.88,363.07L449.71,363.24L450.55,363.65L451.38,363.29L452.21,363.80L453.05,363.72L453.88,363.23L454.72,363.87L455.55,363.86L456.39,363.89L457.22,363.28L458.05,363.89L458.89,364.05L459.72,363.41L460.56,364.03L461.39,363.47L462.22,363.65L463.06,363.54L463.89,363.50L464.73,363.86L465.56,363.73L466.40,364.41L467.23,363.86L468.06,364.12L468.90,364.00L469.73,364.55L470.57,364.08L471.40,363.98L472.23,364.77L473.07,364.63L473.90,364.51L474.74,364.37L475.57,364.93L476.40,365.06L477.24,365.08L478.07,364.85L478.91,364.82L479.74,365.19L480.58,365.29L481.41,365.34L482.24,365.46L482.24,365.87L481.41,365.75L480.58,365.70L479.74,365.60L478.91,365.23L478.07,365.27L477.24,365.49L476.40,365.47L475.57,365.34L474.74,364.78L473.90,364.92L473.07,365.04L472.23,365.18L471.40,364.39L470.57,364.49L469.73,364.96L468.90,364.41L468.06,364.53L467.23,364.27L466.40,364.82L465.56,364.14L464.73,364.27L463.89,363.91L463.06,363.96L462.22,364.06L461.39,363.88L460.56,364.44L459.72,363.82L458.89,364.46L458.05,364.30L457.22,363.69L456.39,364.30L455.55,364.27L454.72,364.28L453.88,363.64L453.05,364.13L452.21,364.21L451.38,363.70L450.55,364.06L449.71,363.65L448.88,363.48L448.04,363.50L447.21,363.36L446.38,363.25L445.54,363.41L444.71,363.25L443.87,363.78L443.04,363.45L442.20,363.56L441.37,363.07L440.54,362.92L439.70,363.30L438.87,362.78L438.03,362.76L437.20,363.08L436.37,363.02L435.53,363.26L434.70,362.69L433.86,362.76L433.03,362.94L432.19,362.73L431.36,362.56L430.53,362.80L429.69,362.59L428.86,362.78L428.02,362.90L427.19,362.87L426.36,362.73L425.52,362.60L424.69,362.97L423.85,362.66L423.02,362.82L422.19,363.03L421.35,363.21L420.52,363.27L419.68,363.00L418.85,362.70L418.01,362.81L417.18,363.15L416.35,362.96L415.51,363.05L414.68,362.89L413.84,362.68L413.01,362.61L412.18,362.83L411.34,362.84L410.51,362.81L409.67,362.64L408.84,362.96L408.00,362.31L407.17,362.18L406.34,362.91L405.50,362.84L404.67,362.81L403.83,362.85L403.00,362.87L402.17,362.22L401.33,362.41L400.50,362.39L399.66,362.24L398.83,362.38L397.99,362.31L397.16,362.43L396.33,361.70L395.49,361.82L394.66,362.27L393.82,361.53L392.99,361.48L392.16,361.32L391.32,361.36L390.49,361.80L389.65,361.21L388.82,361.37L387.98,361.58L387.15,361.39L386.32,360.97L385.48,361.16L384.65,360.77L383.81,361.21L382.98,361.07L382.15,360.74L381.31,360.28L380.48,360.52L379.64,360.23L378.81,359.93L377.98,360.03L377.14,359.95L376.31,358.90L375.47,359.87L374.64,358.44L373.80,357.46L372.97,357.08L372.14,356.65L371.30,356.69L370.47,355.89L369.63,357.07L368.80,355.24L367.97,357.56L367.13,356.36L366.30,340.87L365.46,329.13L364.63,317.15L363.79,306.57L362.96,294.28L362.13,282.46L361.29,276.75L360.46,273.78L359.62,271.98L358.79,267.72L357.96,266.84L357.12,267.88L356.29,266.11L355.45,266.74L354.62,266.02L353.78,267.83L352.95,267.19L352.12,265.54L351.28,265.51L350.45,266.00L349.61,264.86L348.78,265.60L347.95,264.37L347.11,263.19L346.28,264.42L345.44,264.10L344.61,263.09L343.78,261.87L342.94,261.26L342.11,260.42L341.27,261.03L340.44,260.53L339.60,257.47L338.77,257.34L337.94,256.61L337.10,255.64L336.27,255.71L335.43,254.55L334.60,252.62L333.77,252.34L332.93,252.36L332.10,251.88L331.26,252.23L330.43,250.55L329.59,250.80L328.76,249.98L327.93,250.34L327.09,250.14L326.26,250.02L325.42,248.20L324.59,248.91L323.76,249.03L322.92,248.76L322.09,246.88L321.25,247.68L320.42,247.77L319.58,247.09L318.75,247.29L317.92,248.00L317.08,246.72L316.25,246.78L315.41,247.51L314.58,246.79L313.75,247.83L312.91,247.30L312.08,247.55L311.24,248.64L310.41,247.73L309.57,248.22L308.74,248.89L307.91,247.84L307.07,248.26L306.24,249.73L305.40,249.98L304.57,248.57L303.74,247.81L302.90,248.49L302.07,247.34L301.23,247.96L300.40,247.34L299.57,248.47L298.73,247.85L297.90,247.32L297.06,248.82L296.23,247.57L295.39,247.48L294.56,249.16L293.73,247.43L292.89,247.76L292.06,246.48L291.22,247.88L290.39,248.57L289.56,247.18L288.72,247.63L287.89,247.53L287.05,246.91L286.22,247.75L285.38,248.47L284.55,247.59L283.72,247.83L282.88,248.27L282.05,248.94L281.21,248.60L280.38,247.64L279.55,247.62L278.71,249.28L277.88,249.03L277.04,250.09L276.21,249.76L275.37,249.37L274.54,248.48L273.71,247.96L272.87,247.79L272.04,245.53L271.20,245.82L270.37,244.66L269.54,244.00L268.70,245.35L267.87,244.02L267.03,244.16L266.20,246.38L265.36,245.68L264.53,247.38L263.70,246.51L262.86,247.60L262.03,245.46L261.19,246.14L260.36,246.79L259.53,247.27L258.69,246.76L257.86,246.49L257.02,248.02L256.19,245.86L255.36,246.00L254.52,247.57L253.69,248.04L252.85,247.22L252.02,246.56L251.18,248.20L250.35,246.94L249.52,247.18L248.68,247.04L247.85,246.71L247.01,247.34L246.18,248.62L245.35,248.73L244.51,247.69L243.68,248.29L242.84,248.44L242.01,248.85L241.17,249.02L240.34,249.23L239.51,249.45L238.67,251.23L237.84,251.38L237.00,251.74L236.17,253.13L235.34,253.44L234.50,254.33L233.67,254.18L232.83,255.94L232.00,255.80L231.16,255.23L230.33,253.81L229.50,252.76L228.66,253.59L227.83,253.08L226.99,253.99L226.16,252.24L225.33,253.11L224.49,252.59L223.66,253.31L222.82,254.55L221.99,254.62L221.16,256.50L220.32,257.69L219.49,258.00L218.65,258.43L217.82,260.48L216.98,259.90L216.15,260.68L215.32,262.73L214.48,263.12L213.65,264.61L212.81,266.63L211.98,267.61L211.15,270.42L210.31,272.44L209.48,275.84L208.64,277.75L207.81,281.45L206.97,284.50L206.14,285.82L205.31,289.83L204.47,291.56L203.64,292.54L202.80,295.42L201.97,299.59L201.14,302.47L200.30,306.67L199.47,366.90L198.63,366.90L197.80,366.90L196.96,366.90Z" fill="#6388b8"/><rect x="196.5" y="365.4" width="4" height="1.5" fill="#ad9a1f"/><line x1="221.16" x2="221.16" y1="228.7" y2="366.8" stroke="#ffffff" stroke-opacity="0.035" stroke-width="1"/><line x1="248.96" x2="248.96" y1="228.7" y2="366.8" stroke="#ffffff" stroke-opacity="0.035" stroke-width="1"/><line x1="276.76" x2="276.76" y1="228.7" y2="366.8" stroke="#ffffff" stroke-opacity="0.035" stroke-width="1"/><line x1="304.57" x2="304.57" y1="228.7" y2="366.8" stroke="#ffffff" stroke-opacity="0.035" stroke-width="1"/><line x1="332.38" x2="332.38" y1="228.7" y2="366.8" stroke="#ffffff" stroke-opacity="0.035" stroke-width="1"/><line x1="360.18" x2="360.18" y1="228.7" y2="366.8" stroke="#ffffff" stroke-opacity="0.035" stroke-width="1"/><line x1="387.99" x2="387.99" y1="228.7" y2="366.8" stroke="#ffffff" stroke-opacity="0.035" stroke-width="1"/><line x1="415.79" x2="415.79" y1="228.7" y2="366.8" stroke="#ffffff" stroke-opacity="0.035" stroke-width="1"/><line x1="443.60" x2="443.60" y1="228.7" y2="366.8" stroke="#ffffff" stroke-opacity="0.035" stroke-width="1"/><line x1="471.40" x2="471.40" y1="228.7" y2="366.8" stroke="#ffffff" stroke-opacity="0.035" stroke-width="1"/><line x1="583.3" x2="907.8" y1="341.24" y2="341.24" stroke="#2b2c30" stroke-width="1"/><line x1="583.3" x2="907.8" y1="315.58" y2="315.58" stroke="#2b2c30" stroke-width="1"/><line x1="583.3" x2="907.8" y1="289.92" y2="289.92" stroke="#2b2c30" stroke-width="1"/><line x1="583.3" x2="907.8" y1="264.26" y2="264.26" stroke="#2b2c30" stroke-width="1"/><line x1="583.3" x2="907.8" y1="238.60" y2="238.60" stroke="#2b2c30" stroke-width="1"/><line x1="593.85" x2="593.85" y1="228.7" y2="366.9" stroke="#252629" stroke-width="1"/><line x1="624.09" x2="624.09" y1="228.7" y2="366.9" stroke="#252629" stroke-width="1"/><line x1="654.33" x2="654.33" y1="228.7" y2="366.9" stroke="#252629" stroke-width="1"/><line x1="684.57" x2="684.57" y1="228.7" y2="366.9" stroke="#252629" stroke-width="1"/><line x1="714.81" x2="714.81" y1="228.7" y2="366.9" stroke="#252629" stroke-width="1"/><line x1="745.05" x2="745.05" y1="228.7" y2="366.9" stroke="#252629" stroke-width="1"/><line x1="775.29" x2="775.29" y1="228.7" y2="366.9" stroke="#252629" stroke-width="1"/><line x1="805.53" x2="805.53" y1="228.7" y2="366.9" stroke="#252629" stroke-width="1"/><line x1="835.77" x2="835.77" y1="228.7" y2="366.9" stroke="#252629" stroke-width="1"/><line x1="866.01" x2="866.01" y1="228.7" y2="366.9" stroke="#252629" stroke-width="1"/><line x1="896.25" x2="896.25" y1="228.7" y2="366.9" stroke="#252629" stroke-width="1"/><path d="M597.78,366.90L597.78,366.90L598.69,366.90L599.60,366.90L600.50,366.90L601.41,303.97L602.32,300.30L603.22,296.73L604.13,293.02L605.04,290.57L605.95,287.94L606.85,286.87L607.76,283.88L608.67,280.83L609.57,278.72L610.48,275.74L611.39,274.26L612.30,271.13L613.20,268.83L614.11,265.79L615.02,263.13L615.93,262.91L616.83,261.59L617.74,260.47L618.65,258.53L619.55,257.72L620.46,257.72L621.37,255.93L622.28,256.01L623.18,254.45L624.09,254.29L625.00,253.60L625.90,251.48L626.81,251.82L627.72,251.72L628.63,250.53L629.53,250.59L630.44,251.34L631.35,250.28L632.25,251.08L633.16,251.20L634.07,252.21L634.98,251.47L635.88,252.16L636.79,252.08L637.70,252.16L638.61,252.28L639.51,251.46L640.42,251.01L641.33,250.30L642.23,249.68L643.14,248.61L644.05,247.62L644.96,248.26L645.86,247.07L646.77,247.34L647.68,247.16L648.58,246.21L649.49,246.47L650.40,246.49L651.31,246.03L652.21,245.49L653.12,246.20L654.03,244.66L654.93,245.92L655.84,244.81L656.75,244.61L657.66,245.74L658.56,244.57L659.47,245.11L660.38,244.75L661.29,245.50L662.19,245.39L663.10,245.13L664.01,243.96L664.91,244.99L665.82,244.12L666.73,243.81L667.64,243.73L668.54,244.53L669.45,244.45L670.36,243.97L671.26,243.37L672.17,244.09L673.08,242.93L673.99,242.62L674.89,242.29L675.80,243.24L676.71,241.69L677.61,242.68L678.52,242.50L679.43,243.12L680.34,243.69L681.24,245.53L682.15,245.70L683.06,247.26L683.97,247.46L684.87,247.32L685.78,247.39L686.69,247.40L687.59,247.17L688.50,246.26L689.41,245.69L690.32,246.76L691.22,246.79L692.13,245.31L693.04,245.82L693.94,245.91L694.85,246.12L695.76,245.58L696.67,245.21L697.57,245.72L698.48,245.73L699.39,246.23L700.29,244.96L701.20,246.20L702.11,245.51L703.02,244.98L703.92,245.97L704.83,245.07L705.74,244.73L706.65,245.16L707.55,244.90L708.46,245.85L709.37,245.47L710.27,246.03L711.18,245.19L712.09,246.13L713.00,246.06L713.90,245.43L714.81,245.79L715.72,245.77L716.62,246.67L717.53,246.78L718.44,246.31L719.35,246.41L720.25,246.43L721.16,246.01L722.07,246.12L722.97,245.53L723.88,244.40L724.79,244.18L725.70,244.40L726.60,244.33L727.51,244.58L728.42,245.09L729.33,244.98L730.23,244.40L731.14,244.44L732.05,245.32L732.95,244.86L733.86,245.03L734.77,245.30L735.68,245.50L736.58,245.67L737.49,246.62L738.40,246.52L739.30,247.51L740.21,247.60L741.12,247.58L742.03,248.08L742.93,249.03L743.84,248.48L744.75,249.29L745.65,249.77L746.56,250.98L747.47,250.59L748.38,251.60L749.28,251.98L750.19,253.27L751.10,253.75L752.01,254.97L752.91,255.74L753.82,257.38L754.73,257.94L755.63,258.79L756.54,259.09L757.45,260.21L758.36,259.93L759.26,260.32L760.17,261.01L761.08,261.03L761.98,261.49L762.89,262.55L763.80,262.85L764.71,263.64L765.61,262.94L766.52,263.06L767.43,263.98L768.33,263.94L769.24,264.16L770.15,264.41L771.06,265.48L771.96,264.87L772.87,265.42L773.78,265.56L774.69,268.99L775.59,271.78L776.50,274.64L777.41,280.74L778.31,292.17L779.22,304.46L780.13,315.04L781.04,326.03L781.94,337.43L782.85,354.99L783.76,354.73L784.66,355.22L785.57,356.47L786.48,356.27L787.39,357.03L788.29,357.66L789.20,357.93L790.11,358.05L791.01,358.63L791.92,359.00L792.83,359.61L793.74,359.29L794.64,359.56L795.55,359.56L796.46,359.77L797.37,360.25L798.27,359.90L799.18,360.83L800.09,360.61L800.99,360.78L801.90,360.73L802.81,361.04L803.72,360.52L804.62,360.96L805.53,361.31L806.44,360.90L807.34,361.39L808.25,361.09L809.16,361.32L810.07,361.19L810.97,360.94L811.88,361.13L812.79,361.52L813.69,361.26L814.60,361.47L815.51,361.76L816.42,362.01L817.32,361.70L818.23,361.80L819.14,361.54L820.05,361.60L820.95,361.94L821.86,362.18L822.77,361.75L823.67,362.51L824.58,362.44L825.49,362.09L826.40,362.07L827.30,362.48L828.21,362.10L829.12,361.91L830.02,362.35L830.93,362.33L831.84,362.52L832.75,362.49L833.65,361.95L834.56,362.46L835.47,362.01L836.37,362.07L837.28,362.35L838.19,362.65L839.10,362.08L840.00,362.50L840.91,362.59L841.82,362.69L842.73,362.12L843.63,362.51L844.54,362.66L845.45,362.48L846.35,362.75L847.26,362.32L848.17,362.45L849.08,362.55L849.98,362.13L850.89,362.08L851.80,362.73L852.70,362.28L853.61,362.47L854.52,361.96L855.43,362.15L856.33,362.64L857.24,362.68L858.15,362.83L859.05,362.21L859.96,362.84L860.87,362.64L861.78,362.80L862.68,362.72L863.59,362.81L864.50,362.75L865.41,363.33L866.31,362.85L867.22,363.26L868.13,363.10L869.03,363.30L869.94,363.36L870.85,363.20L871.76,363.29L872.66,363.41L873.57,363.12L874.48,363.28L875.38,363.77L876.29,363.63L877.20,363.49L878.11,363.15L879.01,363.21L879.92,363.52L880.83,363.99L881.73,363.39L882.64,363.72L883.55,363.63L884.46,363.55L885.36,363.65L886.27,363.80L887.18,363.48L888.09,363.97L888.99,364.01L889.90,363.69L890.81,364.28L891.71,364.24L892.62,363.86L893.53,364.54L894.44,363.96L895.34,364.12L896.25,364.39L897.16,364.59L898.06,364.26L898.97,364.23L899.88,364.94L900.79,364.74L901.69,364.76L902.60,364.87L903.51,365.09L904.41,365.31L905.32,365.03L906.23,364.92L907.14,365.61L908.04,365.56L908.04,366.90Z" fill="#3e9a36"/><path d="M597.78,366.90L597.78,366.90L598.69,366.90L599.60,366.90L600.50,366.90L601.41,364.83L602.32,363.30L603.22,362.08L604.13,364.60L605.04,363.14L605.95,362.95L606.85,364.72L607.76,363.68L608.67,362.68L609.57,363.46L610.48,362.61L611.39,364.36L612.30,364.11L613.20,364.51L614.11,363.29L615.02,362.00L615.93,363.03L616.83,362.46L617.74,363.67L618.65,362.55L619.55,364.53L620.46,363.95L621.37,362.77L622.28,362.61L623.18,363.55L624.09,364.58L625.00,364.03L625.90,364.20L626.81,363.98L627.72,362.35L628.63,364.23L629.53,362.12L630.44,362.14L631.35,364.68L632.25,363.68L633.16,363.33L634.07,364.77L634.98,363.54L635.88,362.06L636.79,364.50L637.70,363.01L638.61,364.47L639.51,363.07L640.42,362.09L641.33,364.22L642.23,364.82L643.14,364.59L644.05,363.19L644.96,364.79L645.86,364.59L646.77,363.32L647.68,362.01L648.58,363.55L649.49,363.62L650.40,362.88L651.31,364.56L652.21,363.06L653.12,364.32L654.03,362.97L654.93,361.90L655.84,364.68L656.75,363.14L657.66,362.98L658.56,364.39L659.47,364.02L660.38,361.78L661.29,361.77L662.19,364.47L663.10,362.67L664.01,361.92L664.91,364.12L665.82,362.97L666.73,364.71L667.64,363.72L668.54,362.77L669.45,363.03L670.36,362.46L671.26,364.58L672.17,363.78L673.08,362.19L673.99,363.05L674.89,363.46L675.80,363.61L676.71,361.81L677.61,363.08L678.52,364.79L679.43,362.39L680.34,363.84L681.24,363.51L682.15,364.19L683.06,363.48L683.97,363.85L684.87,364.57L685.78,362.91L686.69,364.53L687.59,362.43L688.50,364.77L689.41,362.44L690.32,362.36L691.22,363.32L692.13,362.66L693.04,364.08L693.94,362.58L694.85,363.54L695.76,364.14L696.67,361.88L697.57,363.61L698.48,363.70L699.39,362.20L700.29,363.71L701.20,362.79L702.11,364.32L703.02,362.25L703.92,364.05L704.83,364.69L705.74,361.84L706.65,364.32L707.55,361.93L708.46,361.81L709.37,362.98L710.27,364.81L711.18,364.66L712.09,364.20L713.00,363.65L713.90,362.96L714.81,361.87L715.72,363.76L716.62,364.41L717.53,363.12L718.44,364.42L719.35,364.58L720.25,363.14L721.16,362.70L722.07,364.65L722.97,363.46L723.88,362.68L724.79,362.49L725.70,363.67L726.60,362.12L727.51,364.33L728.42,362.64L729.33,362.47L730.23,362.14L731.14,363.32L732.05,364.54L732.95,364.70L733.86,363.22L734.77,364.31L735.68,362.91L736.58,364.59L737.49,362.44L738.40,364.16L739.30,364.81L740.21,364.31L741.12,363.44L742.03,363.13L742.93,363.65L743.84,364.31L744.75,363.36L745.65,361.93L746.56,363.20L747.47,361.95L748.38,364.76L749.28,361.79L750.19,362.11L751.10,363.17L752.01,363.24L752.91,363.19L753.82,362.05L754.73,364.65L755.63,362.87L756.54,363.18L757.45,363.92L758.36,362.62L759.26,362.63L760.17,364.53L761.08,362.69L761.98,363.45L762.89,363.34L763.80,362.89L764.71,364.68L765.61,362.99L766.52,363.70L767.43,362.14L768.33,364.14L769.24,362.31L770.15,362.60L771.06,362.92L771.96,362.15L772.87,364.74L773.78,363.01L774.69,362.96L775.59,362.76L776.50,363.59L777.41,364.63L778.31,364.26L779.22,362.97L780.13,364.29L781.04,364.65L781.94,363.75L782.85,363.40L783.76,364.26L784.66,365.31L785.57,363.77L786.48,364.68L787.39,363.75L788.29,365.34L789.20,363.40L790.11,364.15L791.01,363.36L791.92,363.34L792.83,363.65L793.74,366.28L794.64,366.03L795.55,366.15L796.46,365.59L797.37,366.19L798.27,366.16L799.18,366.27L800.09,366.26L800.99,365.42L801.90,365.38L802.81,366.00L803.72,365.63L804.62,365.91L805.53,365.85L806.44,366.01L807.34,365.74L808.25,366.14L809.16,366.12L810.07,365.86L810.97,366.18L811.88,365.94L812.79,365.42L813.69,366.36L814.60,366.28L815.51,365.57L816.42,366.33L817.32,366.13L818.23,365.51L819.14,365.77L820.05,366.16L820.95,366.33L821.86,366.10L822.77,366.08L823.67,365.57L824.58,365.39L825.49,365.58L826.40,365.46L827.30,365.43L828.21,365.49L829.12,365.44L830.02,366.40L830.93,366.85L831.84,366.74L832.75,366.77L833.65,366.59L834.56,366.65L835.47,366.72L836.37,366.47L837.28,366.70L838.19,366.79L839.10,366.76L840.00,366.66L840.91,366.59L841.82,366.61L842.73,366.67L843.63,366.80L844.54,366.69L845.45,366.73L846.35,366.81L847.26,366.62L848.17,366.80L849.08,366.53L849.98,366.56L850.89,366.83L851.80,366.58L852.70,366.73L853.61,366.67L854.52,366.59L855.43,366.51L856.33,366.45L857.24,366.52L858.15,366.79L859.05,366.62L859.96,366.73L860.87,366.89L861.78,366.62L862.68,366.66L863.59,366.46L864.50,366.73L865.41,366.47L866.31,366.64L867.22,366.85L868.13,366.53L869.03,366.75L869.94,366.63L870.85,366.86L871.76,366.89L872.66,366.43L873.57,366.88L874.48,366.82L875.38,366.82L876.29,366.85L877.20,366.48L878.11,366.39L879.01,366.57L879.92,366.70L880.83,366.44L881.73,366.64L882.64,366.83L883.55,366.55L884.46,366.72L885.36,366.76L886.27,366.74L887.18,366.70L888.09,366.81L888.99,366.59L889.90,366.45L890.81,366.61L891.71,366.90L892.62,366.55L893.53,366.89L894.44,366.65L895.34,366.46L896.25,366.55L897.16,366.43L898.06,366.51L898.97,366.76L899.88,366.83L900.79,366.67L901.69,366.55L902.60,366.78L903.51,366.73L904.41,366.52L905.32,366.72L906.23,366.59L907.14,366.62L908.04,366.42L908.04,366.90Z" fill="#b0652a"/><rect x="597.7" y="365.4" width="3.5" height="1.5" fill="#3e9a36"/><line x1="581.7" x2="947.6" y1="478.90" y2="478.90" stroke="#2a2b2f" stroke-width="1"/><line x1="581.7" x2="947.6" y1="464.16" y2="464.16" stroke="#2a2b2f" stroke-width="1"/><line x1="581.7" x2="947.6" y1="449.42" y2="449.42" stroke="#2a2b2f" stroke-width="1"/><line x1="581.7" x2="947.6" y1="434.68" y2="434.68" stroke="#2a2b2f" stroke-width="1"/><line x1="581.7" x2="947.6" y1="419.94" y2="419.94" stroke="#2a2b2f" stroke-width="1"/><line x1="595.30" x2="595.30" y1="414.3" y2="493.6" stroke="#252629" stroke-width="1"/><line x1="629.22" x2="629.22" y1="414.3" y2="493.6" stroke="#252629" stroke-width="1"/><line x1="663.14" x2="663.14" y1="414.3" y2="493.6" stroke="#252629" stroke-width="1"/><line x1="697.06" x2="697.06" y1="414.3" y2="493.6" stroke="#252629" stroke-width="1"/><line x1="730.98" x2="730.98" y1="414.3" y2="493.6" stroke="#252629" stroke-width="1"/><line x1="764.90" x2="764.90" y1="414.3" y2="493.6" stroke="#252629" stroke-width="1"/><line x1="798.82" x2="798.82" y1="414.3" y2="493.6" stroke="#252629" stroke-width="1"/><line x1="832.74" x2="832.74" y1="414.3" y2="493.6" stroke="#252629" stroke-width="1"/><line x1="866.66" x2="866.66" y1="414.3" y2="493.6" stroke="#252629" stroke-width="1"/><line x1="900.58" x2="900.58" y1="414.3" y2="493.6" stroke="#252629" stroke-width="1"/><line x1="934.50" x2="934.50" y1="414.3" y2="493.6" stroke="#252629" stroke-width="1"/><path d="M599.71,493.64L599.71,493.64L600.73,493.64L601.74,493.64L602.76,493.64L603.78,464.39L604.80,459.36L605.82,456.35L606.83,453.63L607.85,451.89L608.87,449.52L609.89,446.65L610.90,446.04L611.92,444.42L612.94,443.31L613.96,442.05L614.97,440.81L615.99,439.98L617.01,438.37L618.03,437.90L619.04,436.70L620.06,435.80L621.08,434.60L622.10,433.66L623.11,432.42L624.13,432.03L625.15,431.42L626.17,430.59L627.18,429.48L628.20,429.75L629.22,428.79L630.24,428.49L631.26,427.75L632.27,427.52L633.29,426.73L634.31,426.74L635.33,426.65L636.34,426.48L637.36,426.77L638.38,427.17L639.40,427.27L640.41,426.57L641.43,426.98L642.45,427.26L643.47,426.48L644.48,426.54L645.50,426.17L646.52,425.79L647.54,426.04L648.55,425.73L649.57,425.05L650.59,425.42L651.61,424.70L652.62,425.15L653.64,424.56L654.66,424.45L655.68,424.14L656.70,424.13L657.71,424.31L658.73,424.46L659.75,424.40L660.77,423.98L661.78,423.90L662.80,424.16L663.82,423.42L664.84,423.71L665.85,423.51L666.87,423.87L667.89,423.82L668.91,423.97L669.92,423.67L670.94,423.69L671.96,423.53L672.98,423.53L673.99,423.12L675.01,423.04L676.03,423.59L677.05,423.37L678.06,423.53L679.08,423.08L680.10,422.79L681.12,423.33L682.14,422.76L683.15,423.04L684.17,423.17L685.19,422.45L686.21,422.69L687.22,422.73L688.24,422.41L689.26,422.48L690.28,422.23L691.29,422.56L692.31,422.96L693.33,423.18L694.35,423.80L695.36,424.33L696.38,424.70L697.40,424.63L698.42,424.23L699.43,424.31L700.45,423.89L701.47,424.08L702.49,423.86L703.50,423.58L704.52,424.28L705.54,424.26L706.56,424.11L707.58,423.86L708.59,423.69L709.61,423.53L710.63,423.84L711.65,423.31L712.66,424.09L713.68,423.38L714.70,423.88L715.72,423.32L716.73,423.99L717.75,423.21L718.77,423.36L719.79,423.15L720.80,423.47L721.82,423.78L722.84,423.11L723.86,423.53L724.87,423.86L725.89,423.49L726.91,423.64L727.93,423.72L728.94,424.04L729.96,424.12L730.98,423.80L732.00,423.97L733.02,424.30L734.03,424.10L735.05,423.82L736.07,423.73L737.09,423.84L738.10,423.81L739.12,423.75L740.14,423.77L741.16,423.70L742.17,423.40L743.19,423.58L744.21,422.98L745.23,422.90L746.24,422.89L747.26,423.28L748.28,423.09L749.30,423.11L750.31,423.48L751.33,422.84L752.35,423.10L753.37,423.40L754.38,423.32L755.40,423.82L756.42,423.88L757.44,423.72L758.46,423.63L759.47,423.79L760.49,424.41L761.51,423.99L762.53,423.83L763.54,424.06L764.56,423.99L765.58,424.03L766.60,424.74L767.61,424.77L768.63,424.85L769.65,425.20L770.67,426.40L771.68,426.63L772.70,427.41L773.72,428.38L774.74,429.00L775.75,429.42L776.77,430.27L777.79,431.37L778.81,431.26L779.82,431.97L780.84,431.99L781.86,431.68L782.88,431.94L783.90,432.55L784.91,432.73L785.93,432.57L786.95,432.46L787.97,432.67L788.98,432.53L790.00,432.78L791.02,432.78L792.04,433.04L793.05,433.31L794.07,433.33L795.09,433.36L796.11,433.40L797.12,433.22L798.14,435.46L799.16,437.39L800.18,441.56L801.19,448.14L802.21,454.20L803.23,461.53L804.25,469.78L805.26,475.77L806.28,481.28L807.30,485.04L808.32,486.76L809.34,487.97L810.35,487.59L811.37,488.11L812.39,488.28L813.41,487.91L814.42,488.18L815.44,488.34L816.46,488.88L817.48,488.54L818.49,488.84L819.51,488.82L820.53,489.32L821.55,489.29L822.56,489.45L823.58,489.81L824.60,489.76L825.62,489.74L826.63,489.68L827.65,489.75L828.67,489.85L829.69,490.20L830.70,490.01L831.72,490.02L832.74,490.34L833.76,490.20L834.78,490.04L835.79,490.06L836.81,490.09L837.83,490.53L838.85,490.32L839.86,490.23L840.88,490.34L841.90,490.51L842.92,490.65L843.93,490.25L844.95,490.29L845.97,490.39L846.99,490.54L848.00,490.33L849.02,490.35L850.04,490.41L851.06,490.48L852.07,490.62L853.09,490.64L854.11,490.62L855.13,490.65L856.14,490.57L857.16,490.77L858.18,490.50L859.20,490.68L860.22,490.78L861.23,490.75L862.25,490.70L863.27,490.69L864.29,490.53L865.30,490.87L866.32,490.82L867.34,490.80L868.36,490.86L869.37,490.60L870.39,490.92L871.41,490.96L872.43,490.73L873.44,490.65L874.46,490.62L875.48,490.76L876.50,490.88L877.51,490.63L878.53,490.71L879.55,490.84L880.57,490.81L881.58,490.65L882.60,490.63L883.62,490.67L884.64,491.06L885.66,490.98L886.67,490.95L887.69,491.08L888.71,490.81L889.73,491.15L890.74,490.77L891.76,490.92L892.78,490.92L893.80,491.03L894.81,490.81L895.83,491.00L896.85,490.88L897.87,490.89L898.88,491.02L899.90,490.91L900.92,491.17L901.94,491.25L902.95,491.05L903.97,491.23L904.99,491.35L906.01,491.21L907.02,491.33L908.04,491.52L909.06,491.21L910.08,491.39L911.10,491.19L912.11,491.43L913.13,491.26L914.15,491.59L915.17,491.65L916.18,491.53L917.20,491.44L918.22,491.45L919.24,491.57L920.25,491.85L921.27,491.76L922.29,491.96L923.31,491.84L924.32,491.60L925.34,491.92L926.36,491.79L927.38,491.86L928.39,492.12L929.41,491.90L930.43,492.22L931.45,492.21L932.46,492.06L933.48,492.31L934.50,491.95L935.52,492.27L936.54,492.24L937.55,492.15L938.57,492.62L939.59,492.26L940.61,492.78L941.62,492.58L942.64,492.62L943.66,492.53L944.68,492.90L945.69,492.68L946.71,492.89L947.73,493.04L947.73,493.64Z" fill="#5b9a55"/><line x1="166.2" x2="486.2" y1="465.6" y2="465.6" stroke="#505155" stroke-width="1"/><rect x="186.5" y="462.1" width="1" height="3.0" fill="#5a8ee8" opacity="0.9"/><rect x="187.5" y="461.4" width="1" height="3.7" fill="#5a8ee8" opacity="0.9"/><rect x="188.5" y="461.6" width="1" height="3.5" fill="#5a8ee8" opacity="0.9"/><rect x="189.5" y="462.0" width="1" height="3.1" fill="#5a8ee8" opacity="0.9"/><rect x="190.5" y="462.5" width="1" height="2.6" fill="#5a8ee8" opacity="0.9"/><rect x="191.5" y="461.7" width="1" height="3.4" fill="#5a8ee8" opacity="0.9"/><rect x="192.5" y="461.8" width="1" height="3.3" fill="#5a8ee8" opacity="0.9"/><rect x="193.5" y="462.5" width="1" height="2.6" fill="#5a8ee8" opacity="0.9"/><rect x="194.5" y="462.6" width="1" height="2.5" fill="#5a8ee8" opacity="0.9"/><rect x="195.5" y="463.2" width="1" height="1.9" fill="#5a8ee8" opacity="0.9"/><rect x="196.5" y="463.7" width="1" height="1.4" fill="#5a8ee8" opacity="0.9"/><rect x="197.5" y="463.2" width="1" height="1.9" fill="#5a8ee8" opacity="0.9"/><rect x="198.5" y="463.0" width="1" height="2.1" fill="#5a8ee8" opacity="0.9"/><rect x="199.5" y="464.0" width="1" height="1.1" fill="#5a8ee8" opacity="0.9"/><rect x="200.5" y="462.9" width="1" height="2.2" fill="#5a8ee8" opacity="0.9"/><rect x="201.5" y="464.0" width="1" height="1.1" fill="#5a8ee8" opacity="0.9"/><rect x="202.5" y="464.1" width="1" height="1.0" fill="#5a8ee8" opacity="0.9"/><rect x="204.5" y="463.2" width="1" height="1.9" fill="#5a8ee8" opacity="0.9"/><rect x="205.5" y="463.7" width="1" height="1.4" fill="#5a8ee8" opacity="0.9"/><rect x="206.5" y="463.6" width="1" height="1.5" fill="#5a8ee8" opacity="0.9"/><rect x="207.5" y="464.2" width="1" height="0.9" fill="#5a8ee8" opacity="0.9"/><rect x="212.5" y="464.3" width="1" height="0.8" fill="#5a8ee8" opacity="0.9"/><rect x="184.4" y="420.1" width="1.7" height="45.5" fill="#4d84e4"/><rect x="186.1" y="458.5" width="1.2" height="7" fill="#4d84e4"/><rect x="190.0" y="465.8" width="2.2" height="0.7" fill="#d86a14" opacity="0.85"/><rect x="194.2" y="465.8" width="1.7" height="0.8" fill="#d86a14" opacity="0.85"/><rect x="196.0" y="465.8" width="1.4" height="1.4" fill="#d86a14" opacity="0.85"/><rect x="199.1" y="465.8" width="2.3" height="1.5" fill="#d86a14" opacity="0.85"/><rect x="206.5" y="465.8" width="1.3" height="1.3" fill="#d86a14" opacity="0.85"/><rect x="212.2" y="465.8" width="1.6" height="1.0" fill="#d86a14" opacity="0.85"/><rect x="215.7" y="465.8" width="1.1" height="0.5" fill="#d86a14" opacity="0.85"/><rect x="221.1" y="465.8" width="2.1" height="1.1" fill="#d86a14" opacity="0.85"/><rect x="223.0" y="465.8" width="1.9" height="1.1" fill="#d86a14" opacity="0.85"/><rect x="224.9" y="465.8" width="2.4" height="0.8" fill="#d86a14" opacity="0.85"/><rect x="227.1" y="465.8" width="1.2" height="0.8" fill="#d86a14" opacity="0.85"/><rect x="231.8" y="465.8" width="2.0" height="1.2" fill="#d86a14" opacity="0.85"/><rect x="240.8" y="465.8" width="1.7" height="1.4" fill="#d86a14" opacity="0.85"/><rect x="243.1" y="465.8" width="1.2" height="1.4" fill="#d86a14" opacity="0.85"/><rect x="247.7" y="465.8" width="1.1" height="1.3" fill="#d86a14" opacity="0.85"/><rect x="249.8" y="465.8" width="1.3" height="0.9" fill="#d86a14" opacity="0.85"/><rect x="251.4" y="465.8" width="2.5" height="1.4" fill="#d86a14" opacity="0.85"/><rect x="254.4" y="465.8" width="2.4" height="0.8" fill="#d86a14" opacity="0.85"/><rect x="258.5" y="465.8" width="2.2" height="1.3" fill="#d86a14" opacity="0.85"/><rect x="261.8" y="465.8" width="1.9" height="0.9" fill="#d86a14" opacity="0.85"/><rect x="265.0" y="465.8" width="1.4" height="1.0" fill="#d86a14" opacity="0.85"/><rect x="268.0" y="465.8" width="2.4" height="1.2" fill="#d86a14" opacity="0.85"/><rect x="269.5" y="465.8" width="2.3" height="1.1" fill="#d86a14" opacity="0.85"/><rect x="272.2" y="465.8" width="2.4" height="0.9" fill="#d86a14" opacity="0.85"/><rect x="275.5" y="465.8" width="1.1" height="0.6" fill="#d86a14" opacity="0.85"/><rect x="277.1" y="465.8" width="2.3" height="0.6" fill="#d86a14" opacity="0.85"/><rect x="279.9" y="465.8" width="1.5" height="1.0" fill="#d86a14" opacity="0.85"/><rect x="282.4" y="465.8" width="1.3" height="0.7" fill="#d86a14" opacity="0.85"/><rect x="287.2" y="465.8" width="2.3" height="1.2" fill="#d86a14" opacity="0.85"/><rect x="291.8" y="465.8" width="2.1" height="0.6" fill="#d86a14" opacity="0.85"/><rect x="295.7" y="465.8" width="1.1" height="0.8" fill="#d86a14" opacity="0.85"/><rect x="297.9" y="465.8" width="1.4" height="1.4" fill="#d86a14" opacity="0.85"/><rect x="300.4" y="465.8" width="1.1" height="1.4" fill="#d86a14" opacity="0.85"/><rect x="303.1" y="465.8" width="2.5" height="1.2" fill="#d86a14" opacity="0.85"/><rect x="305.3" y="465.8" width="1.8" height="1.0" fill="#d86a14" opacity="0.85"/><rect x="310.3" y="465.8" width="2.5" height="0.8" fill="#d86a14" opacity="0.85"/><rect x="312.1" y="465.8" width="2.2" height="0.6" fill="#d86a14" opacity="0.85"/><rect x="315.1" y="465.8" width="1.0" height="1.1" fill="#d86a14" opacity="0.85"/><rect x="317.9" y="465.8" width="1.6" height="1.0" fill="#d86a14" opacity="0.85"/><rect x="320.2" y="465.8" width="1.7" height="0.5" fill="#d86a14" opacity="0.85"/><rect x="327.7" y="465.8" width="1.7" height="0.9" fill="#d86a14" opacity="0.85"/><rect x="332.1" y="465.8" width="2.1" height="1.0" fill="#d86a14" opacity="0.85"/><rect x="343.9" y="465.8" width="2.4" height="0.7" fill="#d86a14" opacity="0.85"/><rect x="346.2" y="465.8" width="2.4" height="1.3" fill="#d86a14" opacity="0.85"/><rect x="349.7" y="465.8" width="1.5" height="0.8" fill="#d86a14" opacity="0.85"/><rect x="351.9" y="465.8" width="1.1" height="1.1" fill="#d86a14" opacity="0.85"/><rect x="357.0" y="465.8" width="2.4" height="0.6" fill="#d86a14" opacity="0.85"/><rect x="359.9" y="465.8" width="2.0" height="0.8" fill="#d86a14" opacity="0.85"/><rect x="362.8" y="465.8" width="1.5" height="1.5" fill="#d86a14" opacity="0.85"/><rect x="366.6" y="465.8" width="1.9" height="0.7" fill="#d86a14" opacity="0.85"/><rect x="368.7" y="465.8" width="1.7" height="1.4" fill="#d86a14" opacity="0.85"/><rect x="371.0" y="465.8" width="1.3" height="0.8" fill="#d86a14" opacity="0.85"/><rect x="373.3" y="465.8" width="2.4" height="0.7" fill="#d86a14" opacity="0.85"/><rect x="379.8" y="465.8" width="1.9" height="0.5" fill="#d86a14" opacity="0.85"/><rect x="382.7" y="465.8" width="1.8" height="0.5" fill="#d86a14" opacity="0.85"/><rect x="384.4" y="465.8" width="2.3" height="1.0" fill="#d86a14" opacity="0.85"/><rect x="386.6" y="465.8" width="2.2" height="1.3" fill="#d86a14" opacity="0.85"/><rect x="389.2" y="465.8" width="1.6" height="0.7" fill="#d86a14" opacity="0.85"/><rect x="391.8" y="465.8" width="2.3" height="1.3" fill="#d86a14" opacity="0.85"/><rect x="396.7" y="465.8" width="2.3" height="0.6" fill="#d86a14" opacity="0.85"/><rect x="401.5" y="465.8" width="1.9" height="1.3" fill="#d86a14" opacity="0.85"/><rect x="404.3" y="465.8" width="1.5" height="1.3" fill="#d86a14" opacity="0.85"/><rect x="406.3" y="465.8" width="1.9" height="0.8" fill="#d86a14" opacity="0.85"/><rect x="409.6" y="465.8" width="1.8" height="0.6" fill="#d86a14" opacity="0.85"/><rect x="412.5" y="465.8" width="1.1" height="0.8" fill="#d86a14" opacity="0.85"/><rect x="414.0" y="465.8" width="2.0" height="1.2" fill="#d86a14" opacity="0.85"/><rect x="415.8" y="465.8" width="1.8" height="1.4" fill="#d86a14" opacity="0.85"/><rect x="418.2" y="465.8" width="1.8" height="1.2" fill="#d86a14" opacity="0.85"/><rect x="421.7" y="465.8" width="1.8" height="0.9" fill="#d86a14" opacity="0.85"/><rect x="424.5" y="465.8" width="1.7" height="1.2" fill="#d86a14" opacity="0.85"/><rect x="432.3" y="465.8" width="2.4" height="1.3" fill="#d86a14" opacity="0.85"/><rect x="438.3" y="465.8" width="2.4" height="1.4" fill="#d86a14" opacity="0.85"/><rect x="441.4" y="465.8" width="1.9" height="0.9" fill="#d86a14" opacity="0.85"/><rect x="446.9" y="465.8" width="1.8" height="1.4" fill="#d86a14" opacity="0.85"/><rect x="450.2" y="465.8" width="1.8" height="1.5" fill="#d86a14" opacity="0.85"/><rect x="456.5" y="465.8" width="1.6" height="0.6" fill="#d86a14" opacity="0.85"/><rect x="458.3" y="465.8" width="1.5" height="1.3" fill="#d86a14" opacity="0.85"/><rect x="460.1" y="465.8" width="1.9" height="0.9" fill="#d86a14" opacity="0.85"/><rect x="461.7" y="465.8" width="1.2" height="0.7" fill="#d86a14" opacity="0.85"/><rect x="465.0" y="465.8" width="1.8" height="1.4" fill="#d86a14" opacity="0.85"/><rect x="466.8" y="465.8" width="2.0" height="0.9" fill="#d86a14" opacity="0.85"/><rect x="472.6" y="465.8" width="1.6" height="0.9" fill="#d86a14" opacity="0.85"/><rect x="475.1" y="465.8" width="1.7" height="1.0" fill="#d86a14" opacity="0.85"/><rect x="485.8" y="465.8" width="1.0" height="0.9" fill="#d86a14" opacity="0.85"/><path d="M352.6,465.6 L366,465.6 L365,483 L362.3,483 L362,470 L360.5,470 L360,481 L357.6,480 L357,468 L354,468 Z" fill="#f07010"/></svg>
<div class="a" style="left:964px;top:48px;width:8px;height:435px;background:#28282b;"></div>
<div class="a" style="left:966px;top:58.3px;width:4.8px;height:169.3px;background:#a3a3a3;border-radius:2.4px"></div>
<svg width="1011" height="520"><path d="M965.6,54.2 L970.9,54.2 L968.25,51.2 Z" fill="#c8c8c8"/><path d="M965.6,477 L970.9,477 L968.25,480 Z" fill="#c8c8c8"/></svg>
</div>
</body></html>
